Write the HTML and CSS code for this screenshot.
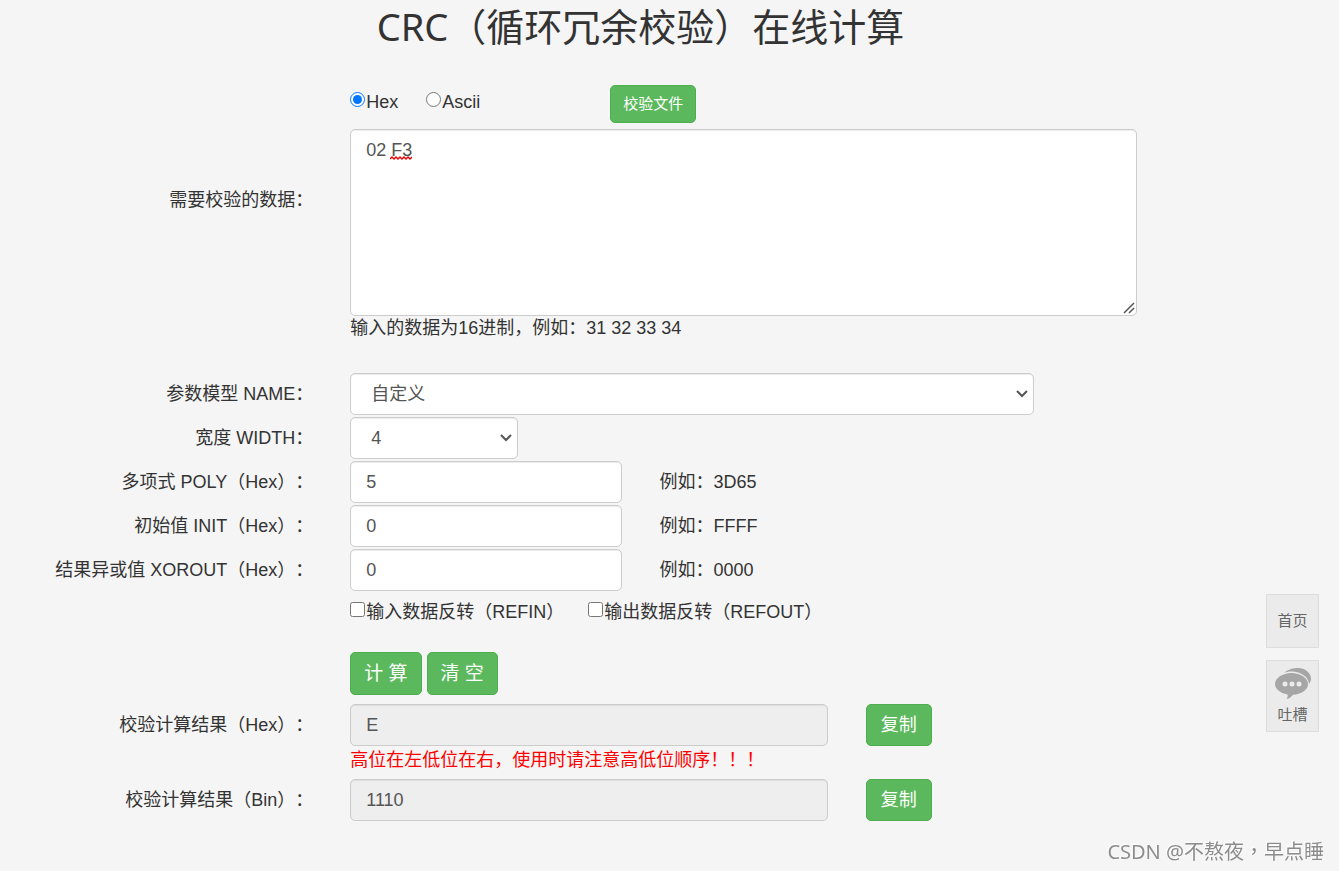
FILE: index.html
```html
<!DOCTYPE html>
<html lang="zh-CN">
<head>
<meta charset="utf-8">
<meta name="viewport" content="width=device-width, initial-scale=1">
<title>CRC（循环冗余校验）在线计算</title>
<link rel="stylesheet" href="styles.css">
</head>
<body>
<main class="container">
  <h1 class="title">CRC（循环冗余校验）在线计算</h1>

  <form class="form">
    <div class="row mode-row">
      <div class="field wide">
        <div class="modes">
          <label class="choice"><input type="radio" name="mode" checked>Hex</label>
          <label class="choice"><input type="radio" name="mode">Ascii</label>
        </div>
        <button type="button" class="btn btn-small">校验文件</button>
      </div>
    </div>

    <div class="row data-row">
      <label class="label" for="data">需要校验的数据：</label>
      <div class="field-block wide">
        <div class="data-box">
          <textarea id="data" class="control data" spellcheck="false">02 F3</textarea>
          <svg class="squiggle" width="22" height="4" viewBox="0 0 22 4" aria-hidden="true"><path d="M0 3 L2 1 L4 3 L6 1 L8 3 L10 1 L12 3 L14 1 L16 3 L18 1 L20 3 L22 1" fill="none" stroke="#f00000" stroke-width="1.4"/></svg>
        </div>
        <p class="help">输入的数据为16进制，例如：31 32 33 34</p>
      </div>
    </div>

    <div class="row">
      <label class="label" for="name">参数模型 NAME：</label>
      <div class="field span-7"><select id="name" class="control select"><option>自定义</option></select></div>
    </div>
    <div class="row">
      <label class="label" for="width">宽度 WIDTH：</label>
      <div class="field span-2"><select id="width" class="control select"><option>4</option></select></div>
    </div>
    <div class="row">
      <label class="label" for="poly">多项式 POLY（Hex）：</label>
      <div class="field span-3"><input id="poly" type="text" class="control" value="5"></div>
      <div class="field span-3">例如：3D65</div>
    </div>
    <div class="row">
      <label class="label" for="init">初始值 INIT（Hex）：</label>
      <div class="field span-3"><input id="init" type="text" class="control" value="0"></div>
      <div class="field span-3">例如：FFFF</div>
    </div>
    <div class="row">
      <label class="label" for="xorout">结果异或值 XOROUT（Hex）：</label>
      <div class="field span-3"><input id="xorout" type="text" class="control" value="0"></div>
      <div class="field span-3">例如：0000</div>
    </div>

    <div class="row flags-row">
      <div class="field wide flags">
        <label class="choice"><input type="checkbox">输入数据反转（REFIN）</label>
        <label class="choice"><input type="checkbox">输出数据反转（REFOUT）</label>
      </div>
    </div>

    <div class="row actions-row">
      <div class="field wide actions">
        <button type="button" class="btn btn-action">计 算</button>
        <button type="button" class="btn btn-action">清 空</button>
      </div>
    </div>

    <div class="row">
      <label class="label" for="hex">校验计算结果（Hex）：</label>
      <div class="field span-5"><input id="hex" type="text" class="control" value="E" readonly></div>
      <div class="field span-3"><button type="button" class="btn">复制</button></div>
    </div>
    <div class="row note-row">
      <p class="field wide note">高位在左低位在右，使用时请注意高低位顺序！！！</p>
    </div>
    <div class="row">
      <label class="label" for="bin">校验计算结果（Bin）：</label>
      <div class="field span-5"><input id="bin" type="text" class="control" value="1110" readonly></div>
      <div class="field span-3"><button type="button" class="btn">复制</button></div>
    </div>
  </form>
</main>

<nav class="side">
  <a class="side-link" href="#">首页</a>
  <a class="side-link side-chat" href="#">
    <svg width="36" height="32" viewBox="0 0 36 32" aria-hidden="true">
      <path d="M9 5C13 1 19 0 23 0C30 0 36 5 36 10.500C36 12 35.500 14 34 16C34 9 25 3 16 3.500C13.500 3.500 11 4 9 5Z" fill="#a6a6a6"/>
      <path d="M16.500 5C25.500 5 33 10 33 16C33 22 26 26.500 18 26.700C16.500 28.500 14.500 30.500 11.500 31C12.500 29.500 13 28 12.500 26.400C5 25 0 21 0 16C0 10 7.500 5 16.500 5Z" fill="#a6a6a6"/>
      <circle cx="10" cy="16" r="2.500" fill="#ebebeb"/><circle cx="17" cy="16" r="2.500" fill="#ebebeb"/><circle cx="24" cy="16" r="2.500" fill="#ebebeb"/>
    </svg>
    <span>吐槽</span>
  </a>
</nav>
<div class="watermark">CSDN @不熬夜<span class="mid-comma" lang="zh-TW">，</span>早点睡</div>
</body>
</html>
```

FILE: styles.css
```css
* { box-sizing: border-box; }

body {
  margin: 0;
  background: #f5f5f5;
  color: #333;
  font: 18px/24px "Liberation Sans", "Noto Sans CJK SC", sans-serif;
  text-spacing-trim: space-all;
}

h1, p { margin: 0; }

button, input, select, textarea { font: inherit; }

.container { padding: 0 80px 24px 22px; }

.title {
  padding: 0 0 33px;
  font: 400 38px/52px "Noto Sans", "Noto Sans CJK SC", sans-serif;
  text-align: center;
}

.form { display: flex; flex-direction: column; gap: 2px; }

.row {
  display: grid;
  grid-template-columns: repeat(12, minmax(0, 1fr));
  align-items: center;
}

.label {
  grid-column: 1 / span 3;
  padding-right: 18px;
  text-align: right;
  white-space: nowrap;
}

.field, .field-block { padding: 0 19px; }
.field { display: flex; align-items: center; }
.wide { grid-column: 4 / span 8; }
.span-2 { grid-column: span 2; }
.span-3 { grid-column: span 3; }
.span-5 { grid-column: span 5; }
.span-7 { grid-column: span 7; }

.control {
  width: 100%;
  height: 42px;
  padding: 8px 15px;
  border: 1px solid #ccc;
  border-radius: 5px;
  background: #fff;
  color: #555;
  box-shadow: inset 0 1px 1px rgba(0, 0, 0, .075);
}
.control:read-only:not(select) { background: #eee; }
.select {
  appearance: none;
  padding: 0 20px;
  background: #fff url("data:image/svg+xml,%3Csvg xmlns='http://www.w3.org/2000/svg' width='12' height='8'%3E%3Cpath d='M1 1l5 5 5-5' fill='none' stroke='%23555' stroke-width='2'/%3E%3C/svg%3E") no-repeat right 5px center;
}

.mode-row { margin-bottom: 4px; }
.modes { display: flex; gap: 28px; width: 260px; padding-bottom: 4px; }

.choice { display: flex; align-items: flex-start; white-space: nowrap; }
.choice input { width: 15px; height: 15px; margin: 2px 1px 0 0; }

.data-row { align-items: start; margin-bottom: 31px; }
.data-row .label { padding-top: 59px; }
.data-box { position: relative; }
.data { display: block; height: 187px; line-height: 25px; resize: both; }
.data::-webkit-resizer {
  background: url("data:image/svg+xml,%3Csvg xmlns='http://www.w3.org/2000/svg' width='12' height='12'%3E%3Cpath d='M1 11L11 1M6 11l5-5' fill='none' stroke='%23555' stroke-width='1.500'/%3E%3C/svg%3E") no-repeat center;
}
.squiggle { position: absolute; left: 40px; top: 27px; }

.flags-row { margin-top: 7px; }
.flags { gap: 24px; }
.actions-row { margin: 26px 0 7px; }
.actions { gap: 5px; }
.note-row { margin: 0 0 5px; }
.note { color: #f00; white-space: nowrap; }

.btn {
  height: 42px;
  padding: 0 14px;
  border: 1px solid #4cae4c;
  border-radius: 5px;
  background: #5cb85c;
  color: #fff;
  white-space: nowrap;
}
.btn-small { height: 38px; padding: 0 12px; font-size: 15px; }
.btn-action { height: 43px; padding: 0 13px; font-size: 19px; }

.side {
  position: fixed;
  right: 20px;
  bottom: 139px;
  display: flex;
  flex-direction: column;
  gap: 12px;
  width: 53px;
}
.side-link {
  display: flex;
  flex-direction: column;
  align-items: center;
  justify-content: center;
  height: 54px;
  border: 1px solid #ddd;
  background: #ebebeb;
  color: #666;
  font-size: 15px;
  line-height: 20px;
  text-decoration: none;
}
.side-chat { gap: 5px; height: 72px; }

.watermark {
  position: fixed;
  right: 15px;
  bottom: 5px;
  color: #8c8c8c;
  font: 20px/28px "Noto Sans", "Noto Sans CJK SC", sans-serif;
  text-shadow: -1px -1px 0 #fff;
  white-space: nowrap;
}
.mid-comma { font-family: "Noto Sans CJK TC", sans-serif; }
```
